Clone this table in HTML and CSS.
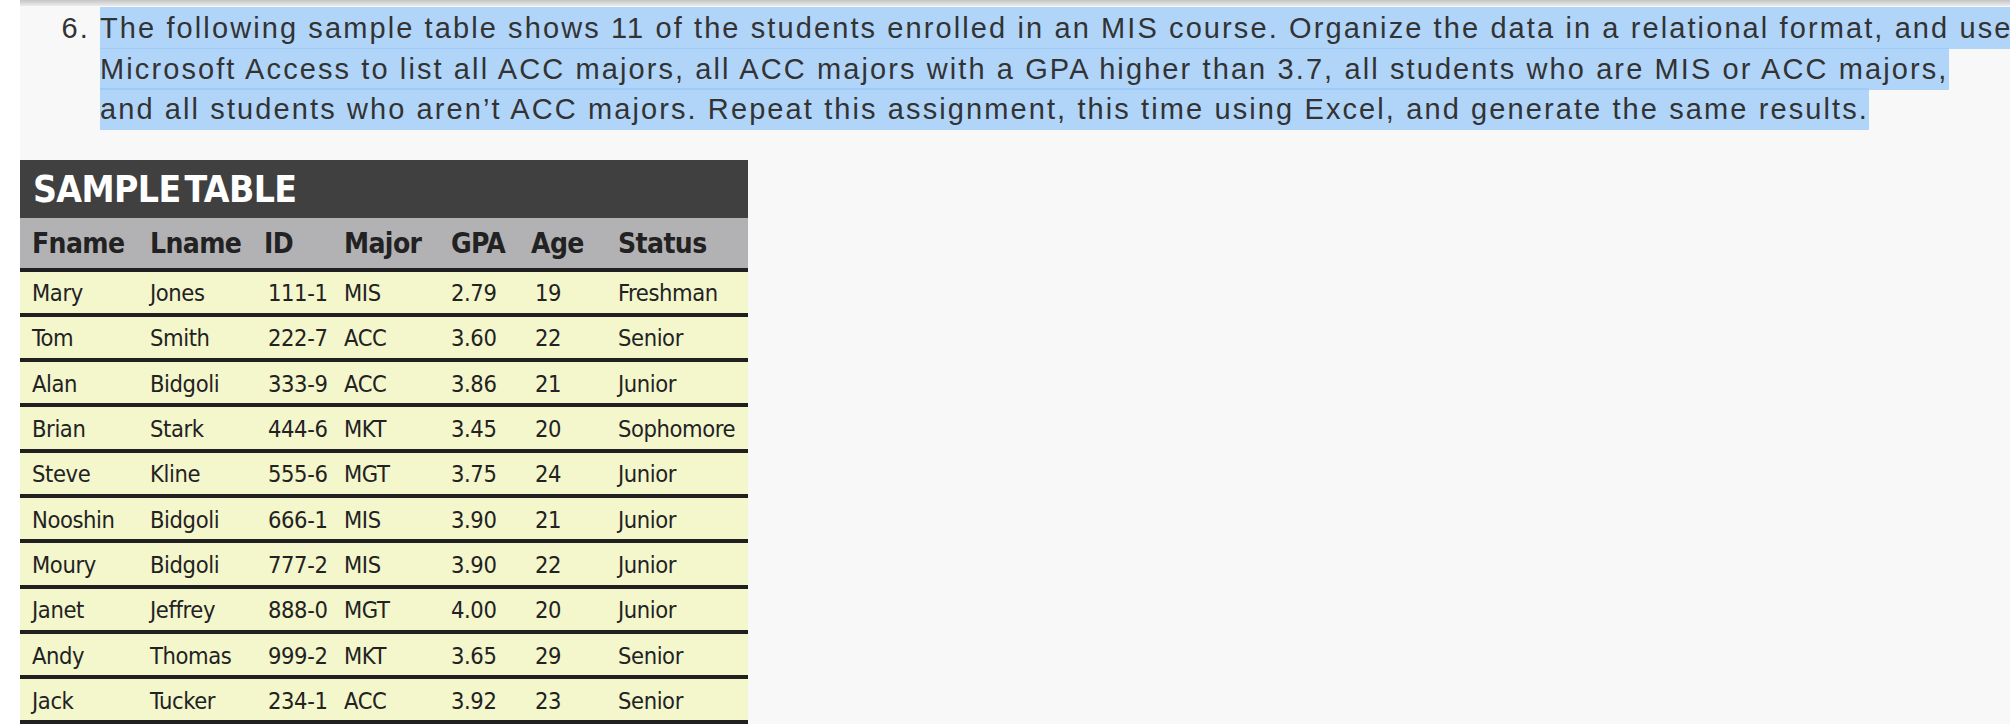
FILE: index.html
```html
<!DOCTYPE html>
<html lang="en">
<head>
<meta charset="utf-8">
<title>Sample table exercise</title>
<link rel="stylesheet" href="styles.css">
</head>
<body>
<div class="page">
  <div class="topshade"></div>
  <div class="question">
    <span class="num">6.</span>
    <p class="qtext"><span class="hl">The following sample table shows 11 of the students enrolled in an MIS course. Organize the data in a relational format, and use </span><br><span class="hl">Microsoft Access to list all ACC majors, all ACC majors with a GPA higher than 3.7, all students who are MIS or ACC majors, </span><br><span class="hl">and all students who aren’t ACC majors. Repeat this assignment, this time using Excel, and generate the same results.</span></p>
  </div>

  <div class="sample">
    <div class="title">SAMPLE TABLE</div>
    <div class="row head">
      <span>Fname</span><span>Lname</span><span class="hid">ID</span><span>Major</span><span>GPA</span><span class="hage">Age</span><span>Status</span>
    </div>
    <div class="row"><span>Mary</span><span>Jones</span><span>111-1</span><span>MIS</span><span>2.79</span><span>19</span><span>Freshman</span></div>
    <div class="row"><span>Tom</span><span>Smith</span><span>222-7</span><span>ACC</span><span>3.60</span><span>22</span><span>Senior</span></div>
    <div class="row"><span>Alan</span><span>Bidgoli</span><span>333-9</span><span>ACC</span><span>3.86</span><span>21</span><span>Junior</span></div>
    <div class="row"><span>Brian</span><span>Stark</span><span>444-6</span><span>MKT</span><span>3.45</span><span>20</span><span>Sophomore</span></div>
    <div class="row"><span>Steve</span><span>Kline</span><span>555-6</span><span>MGT</span><span>3.75</span><span>24</span><span>Junior</span></div>
    <div class="row"><span>Nooshin</span><span>Bidgoli</span><span>666-1</span><span>MIS</span><span>3.90</span><span>21</span><span>Junior</span></div>
    <div class="row"><span>Moury</span><span>Bidgoli</span><span>777-2</span><span>MIS</span><span>3.90</span><span>22</span><span>Junior</span></div>
    <div class="row"><span>Janet</span><span>Jeffrey</span><span>888-0</span><span>MGT</span><span>4.00</span><span>20</span><span>Junior</span></div>
    <div class="row"><span>Andy</span><span>Thomas</span><span>999-2</span><span>MKT</span><span>3.65</span><span>29</span><span>Senior</span></div>
    <div class="row"><span>Jack</span><span>Tucker</span><span>234-1</span><span>ACC</span><span>3.92</span><span>23</span><span>Senior</span></div>
  </div>
</div>
</body>
</html>
```

FILE: styles.css
```css
html, body {
  margin: 0;
  padding: 0;
  background: #ffffff;
  overflow: hidden;
}

.page {
  margin-left: 20px;
  background: #f8f8f8;
  height: 724px;
  overflow: hidden;
}

.topshade {
  height: 6px;
  margin-left: -20px;
  background: linear-gradient(#c4c4c4, #ececec);
}

.question {
  display: flex;
  align-items: flex-start;
  padding-top: 2px;
  font-family: "Liberation Sans", Arial, sans-serif;
  font-size: 29px;
  letter-spacing: 2.1px;
  color: #333333;
  line-height: 40.5px;
}

.num {
  flex: none;
  width: 80px;
  box-sizing: border-box;
  padding-right: 10px;
  text-align: right;
}

.qtext {
  margin: 0;
  flex: none;
  white-space: nowrap;
}

.hl {
  background: rgba(150, 200, 250, 0.72);
  padding: 5px 0;
}

.sample {
  margin-top: 30px;
  width: 728px;
  font-family: "DejaVu Sans Condensed", "DejaVu Sans", sans-serif;
  color: #222222;
}

.title {
  height: 58px;
  background: #404040;
  color: #ffffff;
  font-weight: 700;
  font-size: 37px;
  letter-spacing: -0.6px;
  line-height: 60px;
  padding-left: 13px;
  word-spacing: -7px;
}

.row {
  display: grid;
  grid-template-columns: 118px 118px 76px 107px 84px 83px 1fr;
  align-items: center;
  padding-left: 12px;
  height: 41.3px;
  background: #f4f6cc;
  border-bottom: 4px solid #202020;
  font-size: 23.5px;
  letter-spacing: -0.4px;
  white-space: nowrap;
}

.row span {
  padding-top: 2px;
}

.row.head {
  height: 50px;
  background: #b2b2b4;
  font-weight: 700;
  font-size: 28px;
  letter-spacing: -0.6px;
}

.hid {
  margin-left: -4px;
}

.hage {
  margin-left: -4px;
}
```
